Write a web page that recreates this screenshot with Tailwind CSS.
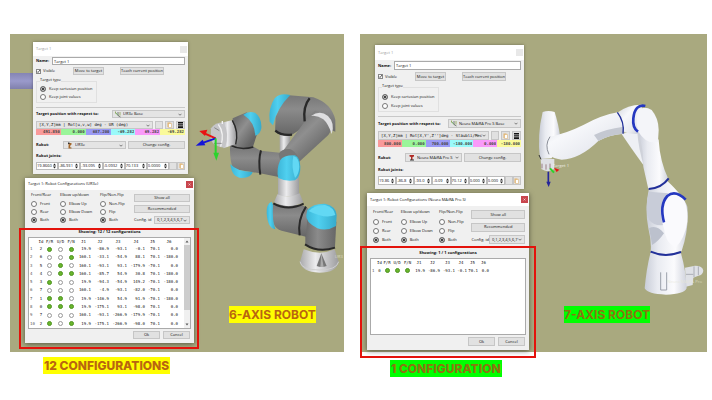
<!DOCTYPE html>
<html lang="en">
<head>
    <meta charset="UTF-8">
    <meta name="viewport" content="width=device-width, initial-scale=1">
    <title>Robot Configurations</title>
    <script src="https://cdn.jsdelivr.net/npm/@tailwindcss/browser@4"></script>
</head>
<body class="bg-white font-['Open_Sans',sans-serif] text-[#111]">
    <main class="min-h-screen grid grid-cols-[334fr_347fr] items-start gap-4 pt-[34px] pl-[10px] pr-[5px]">
        <section class="relative h-[318px] bg-[#a9a97f]" aria-label="6-axis robot">
            <div class="absolute left-0 top-[39px] w-[23px] h-4 bg-linear-to-b from-[#8585b4] via-[#9a9acb] to-[#8080ac]"></div>
            <svg class="absolute right-0 top-[46px] w-[164px] h-[272px]" viewBox="0 0 492 816" aria-hidden="true">
                <defs>
                    <linearGradient id="tube" x1="0" x2="1"><stop offset="0" stop-color="#6a6a6a"/><stop offset=".4" stop-color="#8b8b8b"/><stop offset="1" stop-color="#666"/></linearGradient>
                    <linearGradient id="tubeV" x1="0" x2="0" y1="0" y2="1"><stop offset="0" stop-color="#777"/><stop offset=".35" stop-color="#8b8b8b"/><stop offset="1" stop-color="#666"/></linearGradient>
                    <linearGradient id="arm" x1="0" y1="0" x2="1" y2="1"><stop offset=".2" stop-color="#707070"/><stop offset=".45" stop-color="#8f8f8f"/><stop offset=".8" stop-color="#646464"/></linearGradient>
                    <linearGradient id="metal" x1="0" x2="1"><stop offset="0" stop-color="#a9a9ab"/><stop offset=".4" stop-color="#ececee"/><stop offset="1" stop-color="#9c9c9e"/></linearGradient>
                    <linearGradient id="cap" x1="0" x2="1"><stop offset="0" stop-color="#3cb6d8"/><stop offset=".4" stop-color="#50d0f0"/><stop offset="1" stop-color="#36aacb"/></linearGradient>
                </defs>
                <!-- base -->
                <path d="M371 508 Q420 528 464 508 L476 545 Q470 578 418 578 Q364 575 360 545Z" fill="url(#metal)"/>
                <path d="M424 520 L410 558 Q424 564 440 558Z" fill="#777"/>
                <path d="M424 520 L421 561 L431 561Z" fill="#aaa"/>
                <path d="M360 545 Q364 570 418 570 Q470 570 476 545" fill="none" stroke="#cfcfcf" stroke-width="3"/>
                <path d="M376 410 L376 495 Q420 525 465 500 L469 425Z" fill="url(#tube)"/>
                <path d="M375 493 Q415 520 465 503" fill="none" stroke="#292929" stroke-width="6"/>
                <!-- shoulder -->
                <path d="M276 372 Q270 445 305 452 L378 470 L384 385 L368 376Z" fill="url(#tubeV)"/>
                <path d="M275 365 Q258 372 260 400 Q263 445 286 448 Q276 420 279 375Z" fill="url(#cap)"/>
                <path d="M378 380 Q352 420 359 466" fill="none" stroke="#292929" stroke-width="6"/>
                <path d="M382 390 Q400 370 435 371 Q468 378 470 405 L468 438 Q440 455 412 445 Q375 425 379 405Z" fill="url(#cap)"/>
                <path d="M386 393 Q405 374 435 375 Q462 382 466 405 Q435 418 386 393" fill="#62d8f4"/>
                <!-- vertical link -->
                <path d="M299 160 H330 V215 H299Z" fill="url(#metal)"/>
                <path d="M294 285 H357 V350 H294Z" fill="url(#metal)"/>
                <path d="M292 343 Q325 358 359 340 L370 367 Q326 390 282 367Z" fill="url(#metal)"/>
                <path d="M280 370 Q324 395 371 371" fill="none" stroke="#292929" stroke-width="6"/>
                <!-- elbow -->
                <path d="M318 45 L400 52 Q455 70 466 120 L466 155 L395 125 L335 165 Q306 170 285 155 L287 110Z" fill="url(#tubeV)"/>
                <path d="M385 110 L405 92 Q435 92 460 140 L445 165 L357 246 L300 225Z" fill="url(#arm)"/>
                <path d="M393 108 Q420 88 444 108 Q466 130 455 162 Q444 130 430 118 Q412 105 393 108Z" fill="#dedee0"/>
                <path d="M389 55 Q368 80 374 124" fill="none" stroke="#292929" stroke-width="7"/>
                <path d="M286 152 Q304 168 336 164" fill="none" stroke="#292929" stroke-width="7"/>
                <path d="M331 45 Q300 37 284 55 Q264 85 269 125 L279 136 Q290 85 331 45Z" fill="url(#cap)"/>
                <!-- forearm -->
                <path d="M150 200 L220 200 L242 212 L335 222 L330 298 L240 280 L160 267 Q149 245 150 200Z" fill="url(#tubeV)"/>
                <path d="M296 222 Q305 205 330 207 Q345 213 355 232 L300 240Z" fill="#777"/>
                <path d="M243 211 Q234 240 241 284" fill="none" stroke="#292929" stroke-width="6"/>
                <path d="M151 252 Q170 275 218 276 Q215 293 185 294 Q155 292 151 252Z" fill="url(#cap)"/>
                <path d="M301 240 Q310 225 345 226 Q360 232 361 260 Q362 290 345 301 Q315 305 295 294 Q288 268 301 240Z" fill="url(#cap)"/>
                <path d="M340 228 Q358 232 358 260 Q357 282 345 294 Q333 260 340 228" fill="#62d8f4"/>
                <!-- wrist -->
                <path d="M158 115 L200 97 Q225 120 232 160 L218 203 Q180 212 151 201 L155 190Z" fill="url(#arm)"/>
                <path d="M190 104 Q205 92 225 98 Q246 112 244 145 Q240 165 226 167 Q224 125 190 104Z" fill="url(#cap)"/>
                <path d="M151 196 Q182 212 220 201" fill="none" stroke="#292929" stroke-width="5"/>
                <path d="M125 128 L155 121 Q174 155 166 193 L130 205Z" fill="url(#metal)"/>
                <path d="M157 121 Q177 155 167 193" fill="none" stroke="#292929" stroke-width="4"/>
                <path d="M93 145 Q105 127 130 127 Q150 160 135 203 Q102 203 92 178Z" fill="#c5c5c7"/>
                <path d="M115 133 Q135 160 122 200 M127 123 V132" fill="none" stroke="#f3f3f3" stroke-width="4"/>
                <path d="M103 143 L118 152 M102 190 L125 190" stroke="#888" stroke-width="3"/>
                <!-- tool frame -->
                <g stroke-width="6">
                    <path d="M107 175 L75 161" stroke="#e81212"/><path d="M58 153 L82 149 L75 168Z" fill="#e81212"/>
                    <path d="M107 175 L70 188" stroke="#1515d8"/><path d="M47 197 L68 179 L76 196Z" fill="#1515d8"/>
                    <path d="M107 175 V220" stroke="#2cd42c"/><path d="M100 218 H117 L109 242Z" fill="#2cd42c"/>
                </g>
                <text x="464" y="535" font-size="13" fill="#e8e8d8" opacity=".7">UR3</text>
            </svg>
            <div id="ur3e"></div>
            <div class="absolute left-[9px] top-[194px] w-[180px] h-[121px] border-2 border-[#e3120b]"></div>
            <h2 class="absolute left-[219px] top-[272px] h-[17px] bg-[#ffff00] font-['Inter',sans-serif] text-[12px] leading-[17px] font-bold text-[#b96510] whitespace-nowrap">6-AXIS ROBOT</h2>
            <p class="absolute left-[33px] top-[323px] h-[17px] px-px bg-[#ffff00] font-['Inter',sans-serif] text-[12px] leading-[17px] font-extrabold text-[#b96510] whitespace-nowrap">12 CONFIGURATIONS</p>
        </section>

        <section class="relative h-[318px] bg-[#a9a97f]" aria-label="7-axis robot">
            <svg class="absolute right-0 top-0 w-[177px] h-[318px]" viewBox="0 27 531 954" aria-hidden="true">
                <defs>
                    <linearGradient id="shell" x1="0" y1="0" x2="1" y2="1"><stop offset="0" stop-color="#d3d6de"/><stop offset=".35" stop-color="#f7f8fb"/><stop offset=".7" stop-color="#e8eaf0"/><stop offset="1" stop-color="#bfc3cf"/></linearGradient>
                    <linearGradient id="shellH" x1="0" x2="1"><stop offset="0" stop-color="#c9cdd8"/><stop offset=".3" stop-color="#e9ebf1"/><stop offset=".7" stop-color="#fbfbfd"/><stop offset="1" stop-color="#d0d3dd"/></linearGradient>
                </defs>
                <!-- base -->
                <path d="M465 728 L495 722 Q518 722 520 737 Q518 750 505 752 L490 758 L488 780 L468 785Z" fill="#dfe1e6"/>
                <path d="M492 724 V756 M505 724 V750 M468 748 H490" stroke="#aaadb5" stroke-width="3"/>
                <path d="M362 682 Q405 700 452 682 Q468 735 470 790 Q462 808 408 809 Q352 807 344 790 Q350 725 362 682Z" fill="url(#shellH)"/>
                <path d="M392 742 V795 H410 V742" fill="none" stroke="#9ca0ab" stroke-width="3"/>
                <!-- lower arm -->
                <path d="M357 490 L412 468 Q462 515 472 545 Q478 610 455 678 Q408 698 362 680 Q365 650 355 610 Q343 550 357 490Z" fill="url(#shellH)"/>
                <path d="M357 500 Q343 550 357 585 Q375 605 400 600 Q385 545 415 505Z" fill="#c8ccd8"/>
                <path d="M357 610 Q365 650 366 660 Q385 650 402 625 Q380 598 357 610Z" fill="#bcc1cd"/>
                <path d="M400 605 Q385 550 405 520 Q425 502 450 512 Q475 530 472 590 Q465 640 435 670 Q405 650 402 610Z" fill="#fafafd"/>
                <path d="M402 592 Q388 540 412 513 Q436 493 467 524" fill="none" stroke="#2538c0" stroke-width="8"/>
                <path d="M362 680 Q405 699 453 681" fill="none" stroke="#22309a" stroke-width="6"/>
                <!-- upper arm -->
                <path d="M275 327 Q300 365 340 420 L350 340 L320 315Z" fill="#eef0f4"/>
                <path d="M322 322 Q340 320 342 425 Q325 370 322 322Z" fill="#cfd2da"/>
                <path d="M325 320 Q342 380 340 425 L355 492 Q395 492 415 462 Q390 410 386 345 L365 310Z" fill="url(#shellH)"/>
                <path d="M264 262 Q295 238 335 239 L340 325 Q310 330 283 322Z" fill="url(#shell)"/>
                <path d="M325 258 Q340 240 365 255 Q386 280 386 315 L384 350 Q350 360 325 320 Q315 285 325 258Z" fill="#f4f5f9"/>
                <path d="M346 243 Q315 236 310 280 Q307 308 324 320" fill="none" stroke="#2538c0" stroke-width="8"/>
                <path d="M356 492 Q395 489 416 460" fill="none" stroke="#22309a" stroke-width="6"/>
                <!-- forearm and flange -->
                <path d="M38 261 Q55 255 74 261 Q86 300 90 332 L65 400 L30 402 Q21 330 38 261Z" fill="url(#shellH)"/>
                <path d="M60 335 Q110 325 160 300 Q215 270 263 262 Q283 290 279 326 Q235 330 205 348 Q150 402 95 404 Q50 400 50 367 Q50 345 60 335Z" fill="url(#shell)"/>
                <path d="M205 348 Q235 330 279 326 L281 305 Q225 312 192 330Z" fill="#c4c8d1"/>
                <path d="M60 335 Q43 360 57 388" fill="none" stroke="#8a8e98" stroke-width="3"/>
                <path d="M262 262 Q284 290 279 326" fill="none" stroke="#22309a" stroke-width="4"/>
                <path d="M32 402 H73 V432 Q53 445 34 432Z" fill="#dfe0e5"/>
                <path d="M36 416 V430 M48 418 V434 M60 416 V432" stroke="#9b7f84" stroke-width="3"/>
                <path d="M27 390 L33 403" stroke="#333" stroke-width="3"/>
                <!-- tool frame -->
                <path d="M55 440 V475" stroke="#25259a" stroke-width="5"/><path d="M49 470 H62 L56 486Z" fill="#25259a"/>
                <path d="M60 430 L72 443" stroke="#2cd42c" stroke-width="6"/>
                <path d="M72 428 L88 434 L80 441Z" fill="#e81212"/>
                <text x="68" y="427" font-size="13" fill="#fff" opacity=".8">Target 1</text>
                <text x="412" y="774" font-size="13" fill="#e8e8d8" opacity=".7">Neura MAiRA Pro</text>
            </svg>
            <div id="maira"></div>
            <div class="absolute left-0 top-[212px] w-[176px] h-[112px] border-2 border-[#e3120b]"></div>
            <h2 class="absolute left-[204px] top-[272px] h-[17px] bg-[#00ff00] font-['Inter',sans-serif] text-[12px] leading-[17px] font-bold text-[#8c7410] whitespace-nowrap">7-AXIS ROBOT</h2>
            <p class="absolute left-[30px] top-[326px] h-[17px] px-px bg-[#00ff00] font-['Inter',sans-serif] text-[12px] leading-[17px] font-extrabold text-[#8c7410] whitespace-nowrap">1 CONFIGURATION</p>
        </section>
    </main>

    <script>
        const robots = [
            {
                id: 'ur3e',
                targetWindow: 'left-[23px] top-[8px] w-[155px]',
                configWindow: 'left-[15px] top-[144px] w-[169px]',
                row: 'h-[8px]', title: 'h-[14px]', configTitle: 'h-[12px]', cells: 'h-[6px]', tableBox: 'h-[92px]', tableHeight: 'h-[98px]',
                name: 'UR3e', frame: 'UR3e Base',
                format: '[X,Y,Z]mm | Rot[u,v,w] deg   - UR (deg)',
                pose: ['491.850', '0.000', '687.200', '-69.282', '69.282', '-69.282'],
                joints: ['19.8660', '-86.931', '-93.095', '-0.0932', '70.133', '0.0000'],
                showing: 'Showing: 12 / 12 configurations',
                scroll: true,
                columns: [9, 6, 11, 11, 10, 15, 18, 18, 18, 15, 18],
                configs: [
                    [2, 1, 0, 1, '19.9', '-86.9', '-93.1', '-0.1', '70.1', '0.0'],
                    [6, 0, 0, 1, '160.1', '-33.1', '-54.9', '88.1', '70.1', '-180.0'],
                    [5, 0, 1, 0, '160.1', '-93.1', '93.1', '-179.9', '-70.1', '0.0'],
                    [4, 0, 1, 1, '160.1', '-85.7', '54.9', '30.8', '70.1', '-180.0'],
                    [3, 1, 0, 0, '19.9', '-94.3', '-54.9', '149.2', '-70.1', '-180.0'],
                    [7, 0, 0, 0, '160.1', '-4.9', '-93.1', '-82.0', '-70.1', '0.0'],
                    [1, 1, 1, 0, '19.9', '-146.9', '54.9', '91.9', '-70.1', '-180.0'],
                    [0, 1, 1, 1, '19.9', '-175.1', '93.1', '-98.0', '70.1', '0.0'],
                    [7, 0, 0, 0, '160.1', '-93.1', '-266.9', '-179.9', '-70.1', '0.0'],
                    [2, 1, 0, 1, '19.9', '-175.1', '-266.9', '-98.0', '70.1', '0.0'],
                    [3, 1, 0, 0, '19.9', '-94.3', '-54.9', '149.2', '-70.1', '0.0']
                ]
            },
            {
                id: 'maira',
                targetWindow: 'left-[15px] top-[11px] w-[149px]',
                configWindow: 'left-[7px] top-[159px] w-[162px]',
                row: 'h-[9px]', title: 'h-[15px]', configTitle: 'h-[13px]', cells: 'h-[7px]', tableBox: 'h-[77px]', tableHeight: 'h-[16px]',
                name: 'Neura MAiRA Pro S', frame: 'Neura MAiRA Pro S Base',
                format: "[X,Y,Z]mm | Rot[X,Y',Z'']deg - Stäubli/Mecademi",
                pose: ['800.000', '0.000', '700.000', '-180.000', '0.000', '-180.000'],
                joints: ['19.86', '-86.8', '-93.0', '-0.09', '70.12', '0.000', '0.000'],
                showing: 'Showing: 1 / 1 configurations',
                scroll: false,
                columns: [6, 5, 10, 10, 11, 12, 15, 15, 12, 11, 11],
                configs: [
                    [0, 1, 1, 1, '19.9', '-86.9', '-93.1', '-0.1', '70.1', '0.0']
                ]
            }
        ];

        const poseLabels = ['X', 'Y', 'Z', 'u', 'v', 'w'];
        const poseColors = ['bg-[#f99a9a]', 'bg-[#9af59a]', 'bg-[#9a9af5]', 'bg-[#9afafa]', 'bg-[#f99af9]', 'bg-[#fafa9a]'];
        const chevron = '<svg class="pointer-events-none shrink-0 w-[4px] h-[3px] mr-[2px]" viewBox="0 0 8 6" fill="none" stroke="#555" stroke-width="1.5"><path d="M1 1.5l3 3 3-3"/></svg>';
        const spin = '<svg class="shrink-0 w-[3px] h-[6px] mr-px" viewBox="0 0 6 12" fill="#222"><path d="M3 1l3 4H0zM3 11l3-4H0z"/></svg>';
        const frameIcon = '<svg class="shrink-0 w-[6px] h-[7px] ml-[2px]" viewBox="0 0 12 14" fill="none" stroke-width="1.5"><path d="M6 9V2" stroke="#555"/><path d="M6 9L1 3" stroke="#4a9a3a"/><path d="M6 9l5 3" stroke="#555"/><path d="M1 1v4M10 2v7" stroke="#8aa04a"/></svg>';
        const robotIcons = {
            ur3e: '<svg class="shrink-0 w-[6px] h-[7px] ml-[3px]" viewBox="0 0 12 14"><path d="M2 2h7v3L6 8l1 3h2v2H3v-2L3 7l2-2H2z" fill="#a4682c"/><path d="M2 1h3v3H2z" fill="#333"/></svg>',
            maira: '<svg class="shrink-0 w-[6px] h-[7px] ml-[3px]" viewBox="0 0 12 14"><path d="M1 2h9v3L7 6v6H4V6L1 5z" fill="#b02a25"/><path d="M2 11h8v2H2z" fill="#333"/></svg>'
        };
        const copyIcon = '<svg class="w-[5px] h-[6px]" viewBox="0 0 10 12"><path d="M1 1h6v9H1z" fill="#e4b36a"/><path d="M3 3h6v8H3z" fill="#fff" stroke="#d8a860"/></svg>';

        function radio(r, group, text, checked) {
            return `<label class="flex items-center gap-[3px] whitespace-nowrap ${r.row}">
                <input type="radio" name="${r.id}-${group}" ${checked ? 'checked' : ''} class="appearance-none shrink-0 w-[6px] h-[6px] rounded-full border border-[#777] bg-white checked:bg-[#111] checked:shadow-[inset_0_0_0_1px_#ddd]">
                <span>${text}</span>
            </label>`;
        }

        function button(r, text, width) {
            return `<button class="${r.row} ${width} shrink-0 border border-[#c6c6c6] bg-[#e1e1e1] flex items-center justify-center whitespace-nowrap">${text}</button>`;
        }

        function select(r, id, icon, text, width, font) {
            return `<div class="${r.row} ${width} min-w-0 flex items-center border border-[#c6c6c6] bg-[#e4e4e4]">
                ${icon}<select id="${r.id}-${id}" aria-label="${id}" class="appearance-none min-w-0 flex-1 pl-[2px] ${font} outline-none"><option>${text}</option></select>${chevron}
            </div>`;
        }

        function targetWindow(r) {
            return `<form class="absolute ${r.targetWindow} bg-[#f0f0f0] text-[4px] leading-[6px] shadow-[0_0_3px_rgba(0,0,0,0.35)]">
                <header class="${r.title} bg-white flex items-center justify-between pl-[3px] pr-px text-[#999]">
                    <span>Target 1</span><span class="w-[7px] h-[7px] bg-[#e8e8e8]"></span>
                </header>
                <div class="px-[3px] pt-px pb-1">
                    <div class="flex items-center gap-[3px] ${r.row}">
                        <label for="${r.id}-name" class="font-bold">Name:</label>
                        <input id="${r.id}-name" value="Target 1" class="min-w-0 flex-1 ${r.row} px-px border border-[#aaa] bg-white">
                    </div>
                    <div class="mt-[2px] flex items-center ${r.row}">
                        <label class="w-[37px] flex items-center gap-[2px]">
                            <span class="relative w-[5px] h-[5px] flex">
                                <input type="checkbox" checked class="peer appearance-none w-[5px] h-[5px] border border-[#888] bg-white">
                                <svg class="absolute inset-0 hidden peer-checked:block" viewBox="0 0 10 10" fill="none" stroke="#222" stroke-width="1.5"><path d="M2 5l2 2 4-5"/></svg>
                            </span>Visible
                        </label>
                        ${button(r, 'Move to target', 'w-[31px]')}
                        <span class="w-4"></span>
                        ${button(r, 'Teach current position', 'w-[44px]')}
                    </div>
                    <fieldset class="mt-[2px] w-[57px] px-[3px] pb-px border border-[#e0e0e0]">
                        <legend class="${r.row} whitespace-nowrap">Target type</legend>
                        ${radio(r, 'type', 'Keep cartesian position', true)}
                        ${radio(r, 'type', 'Keep joint values', false)}
                    </fieldset>
                    <hr class="mt-[4px] mb-[2px] border-[#c8c8c8]">
                    <div class="flex items-center justify-between ${r.row}">
                        <label for="${r.id}-frame" class="font-bold whitespace-nowrap">Target position with respect to:</label>
                        ${select(r, 'frame', frameIcon, r.frame, 'w-[73px]', '')}
                    </div>
                    <div class="mt-[3px] flex gap-[2px]">
                        ${select(r, 'format', '', r.format, 'flex-1', "font-['DejaVu_Sans_Mono',monospace] whitespace-pre")}
                        ${button(r, '', 'w-[8px]')}
                        ${button(r, copyIcon, 'w-[9px]')}
                        ${button(r, '<svg class="w-[5px] h-[6px]" viewBox="0 0 5 6" fill="#111"><path d="M0 0h5v1.5H0zM0 2.2h5v1.4H0zM0 4.3h5V6H0z"/></svg>', 'w-[9px]')}
                    </div>
                    <div class="grid grid-cols-6 font-['DejaVu_Sans_Mono',monospace]">
                        ${r.pose.map((v, i) => `<input aria-label="${poseLabels[i]}" value="${v}" class="min-w-0 w-full ${r.cells} text-right pr-px font-bold text-[#444] ${poseColors[i]}">`).join('')}
                    </div>
                    <div class="mt-[6px] flex items-center gap-[2px] ${r.row}">
                        <label for="${r.id}-robot" class="w-[25px] font-bold">Robot:</label>
                        ${select(r, 'robot', robotIcons[r.id], r.name, 'flex-1', '')}
                        ${button(r, 'Change config.', 'w-[57px]')}
                    </div>
                    <div class="mt-[3px] flex items-center font-bold ${r.row}">Robot joints:</div>
                    <div class="mt-[2px] flex ${r.row}">
                        ${r.joints.map((v, i) => `<div class="min-w-0 flex-1 flex items-center border border-[#bbb] bg-white"><input aria-label="Joint ${i + 1}" value="${v}" class="min-w-0 flex-1">${spin}</div>`).join('')}
                        ${button(r, '', 'w-[8px]')}
                        ${button(r, copyIcon, 'w-[8px]')}
                    </div>
                </div>
            </form>`;
        }

        function configTable(r) {
            const dot = on => `<td><span class="block mx-auto w-[5px] h-[5px] rounded-full border ${on ? 'bg-[#69b52c] border-[#4e9420]' : 'bg-white border-[#999]'}"></span></td>`;
            return `<table class="table-fixed w-0 ${r.tableHeight} font-['DejaVu_Sans_Mono',monospace] text-[4px] leading-[6px]">
                <colgroup>${r.columns.map(w => `<col style="width:${w}px">`).join('')}</colgroup>
                <thead><tr>${['', 'Id', 'F/R', 'U/D', 'F/N', 'J1', 'J2', 'J3', 'J4', 'J5', 'J6'].map(h => `<th class="font-normal text-center h-[7px]">${h}</th>`).join('')}</tr></thead>
                <tbody>${r.configs.map((c, i) => `<tr>
                    <td class="text-[#555] pl-px">${i + 1}</td><td class="text-center">${c[0]}</td>
                    ${c.slice(1, 4).map(dot).join('')}
                    ${c.slice(4).map(v => `<td class="text-right">${v}</td>`).join('')}
                </tr>`).join('')}</tbody>
            </table>`;
        }

        function configWindow(r) {
            const group = (title, name, options) => `<fieldset>
                <legend class="${r.row} flex items-center whitespace-nowrap mb-px">${title}</legend>
                ${options.map(o => radio(r, name, o, o === 'Both')).join('')}
            </fieldset>`;
            return `<form class="absolute ${r.configWindow} bg-[#f0f0f0] text-[4px] leading-[6px] shadow-[0_1px_5px_rgba(0,0,0,0.5)]">
                <header class="${r.configTitle} bg-white flex items-center justify-between pl-[3px] pr-px">
                    <span>Target 1: Robot Configurations (${r.name})</span>
                    <button aria-label="Close" class="w-[7px] h-[7px] bg-[#c8454d] flex items-center justify-center"><svg class="w-[3px] h-[3px]" viewBox="0 0 6 6" stroke="#fff"><path d="M1 1l4 4M5 1L1 5"/></svg></button>
                </header>
                <div class="px-[3px] pt-px pb-1">
                    <div class="grid grid-cols-[29fr_40fr_34fr_56fr] pl-[3px] pr-px">
                        ${group('Front/Rear', 'front', ['Front', 'Rear', 'Both'])}
                        ${group('Elbow up/down', 'elbow', ['Elbow Up', 'Elbow Down', 'Both'])}
                        ${group('Flip/Non-Flip', 'flip', ['Non-Flip', 'Flip', 'Both'])}
                        <div class="pt-[3px] flex flex-col justify-between">
                            ${button(r, 'Show all', 'w-full')}
                            ${button(r, 'Recommended', 'w-full')}
                            <div class="flex items-center justify-between">
                                <label for="${r.id}-config" class="whitespace-nowrap">Config. id</label>
                                ${select(r, 'config', '', '0,1,2,3,4,5,6,7', 'w-[36px]', '')}
                            </div>
                        </div>
                    </div>
                    <div class="mt-1 ${r.row} flex items-center justify-center font-bold">${r.showing}</div>
                    <div class="mt-px ${r.tableBox} flex justify-between overflow-hidden border border-[#aaa] bg-white">
                        ${configTable(r)}
                        ${r.scroll ? `<div class="w-[6px] bg-[#f0f0f0] flex flex-col items-center">
                            <svg class="w-[4px] h-[7px]" viewBox="0 0 8 14" fill="#555"><path d="M4 5l3 4H1z"/></svg>
                            <div class="w-full h-[65px] bg-[#cdcdcd]"></div>
                            <svg class="mt-auto w-[4px] h-[7px]" viewBox="0 0 8 14" fill="#555"><path d="M4 9l3-4H1z"/></svg>
                        </div>` : ''}
                    </div>
                    <div class="mt-[2px] pr-px flex justify-end gap-[3px]">
                        ${button(r, 'Ok', 'w-[27px]')}
                        ${button(r, 'Cancel', 'w-[27px]')}
                    </div>
                </div>
            </form>`;
        }

        robots.forEach(r => {
            document.getElementById(r.id).innerHTML = targetWindow(r) + configWindow(r);
        });
    </script>
</body>
</html>
